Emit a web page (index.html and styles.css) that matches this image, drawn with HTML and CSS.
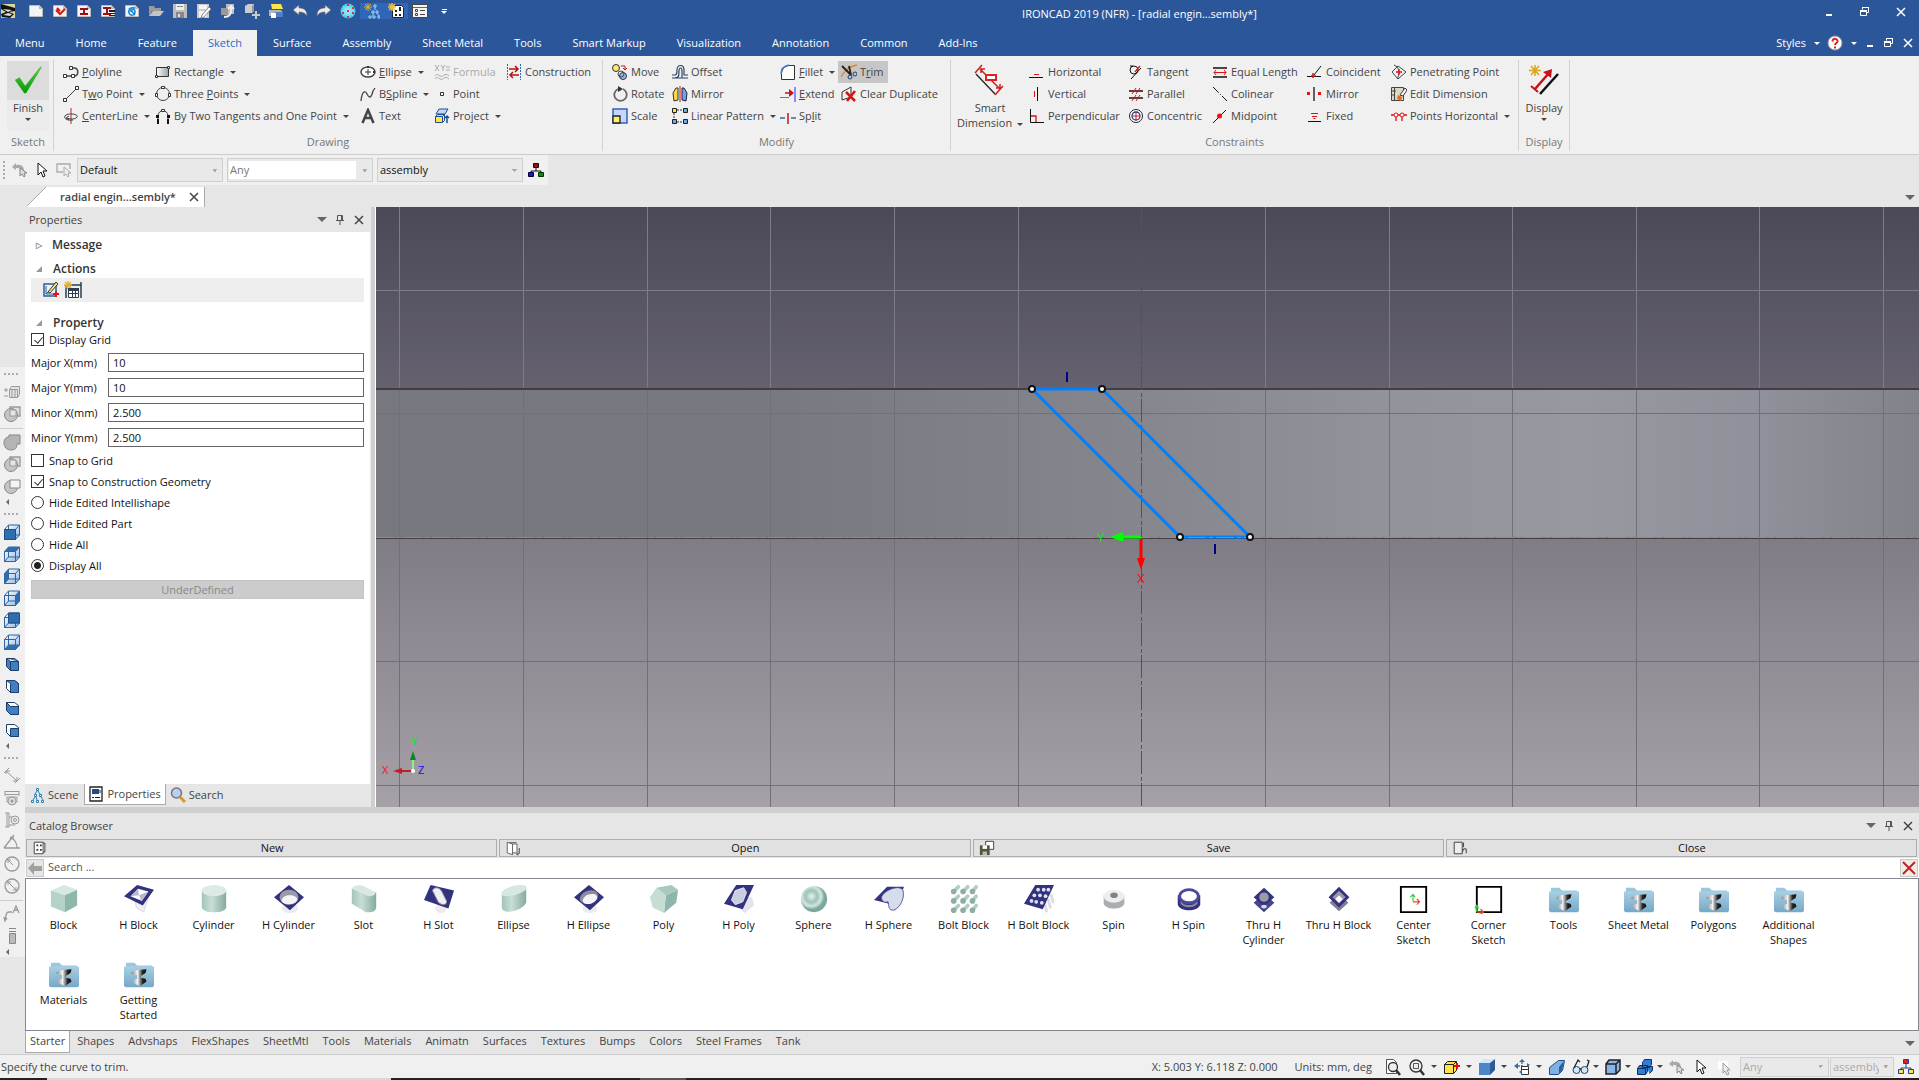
FILE: index.html
```html
<!DOCTYPE html>
<html lang="en">
<head>
  <meta charset="UTF-8" />
  <meta name="viewport" content="width=device-width, initial-scale=1.0"/>
  <title>IRONCAD 2019 (NFR) - [radial engin...sembly*]</title>
  <link rel="stylesheet" href="styles.css">
</head>
<body>
  <!-- icon sprite -->
  <svg class="sprite" aria-hidden="true">
    <defs>
      <linearGradient id="g-mint" x1="0" x2="1" y1="0" y2="1"><stop offset="0" stop-color="#dcebe3"/><stop offset="1" stop-color="#8fb5ab"/></linearGradient>
      <linearGradient id="g-mint2" x1="0" x2="1"><stop offset="0" stop-color="#a3c4ba"/><stop offset=".4" stop-color="#c9ded5"/><stop offset="1" stop-color="#84aba1"/></linearGradient>
      <linearGradient id="g-gray" x1="0" x2="1"><stop offset="0" stop-color="#fff"/><stop offset="1" stop-color="#9aa0a4"/></linearGradient>
      <linearGradient id="g-folder" x1="0" x2="0" y1="0" y2="1"><stop offset="0" stop-color="#a9cfe2"/><stop offset="1" stop-color="#74a9c8"/></linearGradient>
      <linearGradient id="g-metal" x1="0" x2="1"><stop offset="0" stop-color="#8a8a8a"/><stop offset=".4" stop-color="#f4f4f4"/><stop offset=".75" stop-color="#222"/><stop offset="1" stop-color="#111"/></linearGradient>
      <linearGradient id="g-blue" x1="0" x2="1" y1="0" y2="1"><stop offset="0" stop-color="#fff"/><stop offset="1" stop-color="#8fb8e6"/></linearGradient>
      <linearGradient id="g-check" x1="0" x2="0" y1="0" y2="1"><stop offset="0" stop-color="#5cc94a"/><stop offset="1" stop-color="#069a06"/></linearGradient>
      <radialGradient id="g-ball" cx=".4" cy=".4"><stop offset="0" stop-color="#e6f4ef"/><stop offset=".45" stop-color="#9cc3bb"/><stop offset=".75" stop-color="#d2e6de"/><stop offset="1" stop-color="#7ba79c"/></radialGradient>
      <radialGradient id="g-globe"><stop offset="0" stop-color="#c9ffff"/><stop offset="1" stop-color="#35c3e6"/></radialGradient>
    </defs>

    <!-- quick access -->
    <symbol id="logo" viewBox="0 0 16 16"><path fill="#d8d49a" d="M1 1h14v14H1z"/><path fill="#111" d="M1 1l14 4v3L9 9l5 2-4 4-8-1-1-3 5-2-5-3z"/><path fill="#ddd" d="M3 6l9 1-4 2zM3 12l7 1 2-2-4-1z"/></symbol>
    <symbol id="doc" viewBox="0 0 16 16"><path fill="#f4f4f4" stroke="#bbb" d="M1.500 2.500h10l3 3v8h-13z"/><path fill="#bbb" d="M11 2v4h4z"/></symbol>
    <symbol id="doc-check" viewBox="0 0 16 16"><use href="#doc"/><path fill="none" stroke="#d01818" stroke-width="2" d="M4 7l4 4 5-5M5 5l3 3"/></symbol>
    <symbol id="doc-i" viewBox="0 0 16 16"><use href="#doc"/><path fill="#a00d14" d="M4 5h8v2h-3v3h3v2H4v-2h3V7H4z"/></symbol>
    <symbol id="doc-i2" viewBox="0 0 16 16"><use href="#doc"/><path fill="#a00d14" d="M3 4h8v2H8v4h3v2H3v-2h3V6H3z"/><path fill="#222" d="M9 7h6v2H9zM9 10h6v1H9zM9 12h6v1H9z"/></symbol>
    <symbol id="doc-swirl" viewBox="0 0 16 16"><use href="#doc"/><path fill="none" stroke="#0d86d6" stroke-width="1.500" d="M11 5c-5-1-7 2-6 5s6 3 6-1-4-3-4 0M5 5l6 7"/></symbol>
    <symbol id="folder" viewBox="0 0 16 16"><path fill="#9a9a9a" d="M1 3h5l1 2h6v3H4l-3 5z"/><path fill="#c4c4c4" d="M5 8h11l-4 5H1z"/></symbol>
    <symbol id="disk" viewBox="0 0 16 16"><path fill="#bdbdbd" d="M1 1h14v14H1z"/><path fill="#eee" d="M4 1h8v6H4z"/><path fill="#888" d="M4 9h8v6H4zM5 3h6v1H5z"/><path fill="#ddd" d="M6 11h2v3H6z"/></symbol>
    <symbol id="disk-pen" viewBox="0 0 16 16"><path fill="#ccc" d="M1 1h12v14H1z"/><path fill="#f4f4f4" d="M3 2h8v4H3zM3 8h8v6H3z"/><path fill="#fff" stroke="#888" d="M6 12l7-8 2 2-7 8-3 1z"/></symbol>
    <symbol id="redo-page" viewBox="0 0 16 16"><path fill="#bdbdbd" d="M6 1h8v10H6z"/><path fill="#999" d="M1 5h7v7H1z"/><path fill="none" stroke="#eee" stroke-width="2" d="M4 14c6 0 8-4 7-10M8 6l3-3 3 3"/></symbol>
    <symbol id="cube-plus" viewBox="0 0 16 16"><path fill="#ccc" d="M1 3l3-2h6v7L8 10H1z"/><path fill="#999" d="M8 3l2-2v7l-2 2z"/><path fill="none" stroke="#ccc" stroke-width="2" d="M12 8v8M8 12h8"/></symbol>
    <symbol id="printer" viewBox="0 0 16 16"><path fill="#ffe34a" d="M3 1h10l2 5H4z"/><path fill="#b5b5b5" d="M1 7h12l2 3-1 3H1z"/><path fill="#4f7ec2" d="M7 9h8v5H7z"/><path fill="#fff" d="M3 10h5v5H3z"/></symbol>
    <symbol id="undo" viewBox="0 0 16 16"><path fill="#e8e8e8" stroke="#666" stroke-width=".6" d="M1 7l6-5v3c5 0 8 2 8 8-2-3-4-4-8-4v3z"/></symbol>
    <symbol id="redo" viewBox="0 0 16 16"><path fill="#e8e8e8" stroke="#666" stroke-width=".6" d="M15 7L9 2v3c-5 0-8 2-8 8 2-3 4-4 8-4v3z"/></symbol>
    <symbol id="globe" viewBox="0 0 16 16"><circle cx="8" cy="8" r="7.500" fill="url(#g-globe)"/><path fill="none" stroke="#7fe0f4" d="M1 8h14M8 1v14M3 3l10 10M13 3L3 13"/><path fill="#e03048" d="M7 1h2v2H7zM7 7h2v2H7zM2 9h2v2H2zM12 9h2v2h-2zM7 13h2v2H7zM12 4h2v2h-2z"/></symbol>
    <symbol id="tree-star" viewBox="0 0 16 16"><path stroke="#e8b030" d="M4 0v8M0 4h8M1 1l6 6M7 1L1 7"/><path fill="none" stroke="#9fd0f0" d="M10 2h2v2h-2zM8 8h2v2H8zM12 8h2v2h-2zM5 13h2v2H5zM9 13h2v2H9zM14 13h2v2h-2zM11 4v3M9 10v3M13 10l2 3"/></symbol>
    <symbol id="cat-star" viewBox="0 0 16 16"><path fill="#fff" stroke="#222" d="M4.500 2.500h9l2 2v10h-11z"/><path stroke="#f0c040" stroke-width="1.500" d="M4 0v8M0 4h8M1 1l6 6M7 1L1 7"/><path fill="#222" d="M7 7h2v2H7zM11 4h2v4h-2zM7 11h2v2H7zM11 11h2v2h-2z"/></symbol>
    <symbol id="listbox" viewBox="0 0 16 16"><path fill="#f4f4f4" stroke="#444" d="M.5 1.500h15v13H.5z"/><path fill="#666" d="M1 4h14v1H1z"/><path stroke="#444" fill="none" d="M3.500 6.500h2v2h-2zM3.500 10.500h2v2h-2zM8 7.500h5M8 11.500h5"/></symbol>
    <symbol id="help" viewBox="0 0 16 16"><circle cx="8" cy="8" r="7" fill="#fff" stroke="#999"/><path fill="none" stroke="#d22" stroke-width="2" d="M5.500 6.500c0-4 5.500-3 5 0 0 1.500-2.500 2-2.500 3.500M8 11.500v2"/></symbol>
    <symbol id="restore" viewBox="0 0 12 12"><path fill="none" stroke="#fff" stroke-width="1" d="M3.500 3.500v-2h6v5h-2M1.500 4.500h6v5h-6z"/><path fill="#fff" d="M1 4h7v2H1zM3 1h7v1H3z"/></symbol>
    <symbol id="minus" viewBox="0 0 12 12"><path fill="#fff" d="M3 8h6v2H3z"/></symbol>
    <symbol id="cross" viewBox="0 0 12 12"><path fill="none" stroke="currentColor" stroke-width="1.500" d="M2 2l8 8M10 2l-8 8"/></symbol>
    <symbol id="pin" viewBox="0 0 12 12"><path fill="none" stroke="#555" d="M3.500 6.500v-5h5v5M2 6.500h8M6 7v4M7.500 1v5"/></symbol>

    <!-- ribbon -->
    <symbol id="finish" viewBox="0 0 34 34"><path fill="url(#g-check)" d="M3 17l5-3 6 9L30 3h2L15 31h-2z"/></symbol>
    <symbol id="polyline" viewBox="0 0 16 16"><path fill="none" stroke="#444" stroke-width="1.500" d="M2 12h9c5 0 5-8 0-8H8"/><path fill="#fff" stroke="#333" d="M.5 10.500h3v3h-3zM6.500 2.500h3v3h-3zM8.500 10.500h3v3h-3z"/></symbol>
    <symbol id="line2" viewBox="0 0 16 16"><path stroke="#444" d="M2 14L14 2"/><path fill="#fff" stroke="#333" d="M.5 12.500h3v3h-3zM12.500.5h3v3h-3z"/></symbol>
    <symbol id="centerline" viewBox="0 0 16 16"><path stroke="#c22" d="M8 0v16"/><path fill="none" stroke="#444" d="M10 12C2 13 0 9 3 7s13-1 11 2-8 2-10 1M6 8l-3 2 3 2"/></symbol>
    <symbol id="rect" viewBox="0 0 16 16"><path fill="url(#g-gray)" stroke="#333" d="M1.500 3.500h12v9h-12z"/><path fill="#fff" stroke="#333" d="M.5 11.500h2v2h-2zM12.500 2.500h2v2h-2z"/></symbol>
    <symbol id="circle3" viewBox="0 0 16 16"><circle cx="8" cy="8" r="6.500" fill="#eee" stroke="#444"/><path fill="#fff" stroke="#333" d="M6.500.5h3v2h-3zM.5 7.500h2v3h-2zM13.500 7.500h2v3h-2z"/></symbol>
    <symbol id="arc" viewBox="0 0 16 16"><path fill="none" stroke="#444" d="M3 13V8c0-7 10-7 10 0v5"/><path fill="#111" d="M2 11h2v5H2zM12 11h2v5h-2zM1 7h3v3H1zM12 7h3v3h-3z"/><path fill="#fff" stroke="#333" d="M6.500 1.500h3v2h-3z"/></symbol>
    <symbol id="ellipse" viewBox="0 0 16 16"><ellipse cx="8" cy="8" rx="7" ry="5" fill="#fff" stroke="#444" stroke-width="1.500"/><path stroke="#333" d="M8 5v6M5 8h6"/><path fill="#333" d="M7 2h2v2H7zM13 7h2v2h-2z"/></symbol>
    <symbol id="spline" viewBox="0 0 16 16"><path fill="none" stroke="#444" stroke-width="1.300" d="M1 15C2 5 5 4 7 8s4 5 6-3l2-3"/></symbol>
    <symbol id="text" viewBox="0 0 16 16"><path fill="none" stroke="#444" stroke-width="2.500" d="M2.500 15L8 2l5.500 13M5 10h6"/></symbol>
    <symbol id="formula" viewBox="0 0 16 16"><path fill="none" stroke="#aaa" d="M1 1l4 6M5 1L1 7M7 1l2 3 2-3M9 4v3M12 3h4M12 6h4M1 12c2-3 3-1 5 0s3 0 4-1 3-1 5 1M1 15c2-3 3-1 5 0s3 0 4-1 3-1 5 1"/></symbol>
    <symbol id="point" viewBox="0 0 16 16"><path fill="#fff" stroke="#333" d="M6.500 6.500h3v3h-3z"/></symbol>
    <symbol id="project" viewBox="0 0 16 16"><path fill="#bcd8f5" stroke="#1c4f96" d="M5 1h9l-3 5H2z"/><path fill="#ffe34a" stroke="#1c4f96" d="M1.500 8.500h7v6h-7zM1.500 8.500l2-2h7l-2 2M10.500 6.500v6l-2 2"/><path fill="none" stroke="#1c4f96" stroke-width="1.500" d="M13 15V8M11 10l2-2 2 2"/></symbol>
    <symbol id="construct" viewBox="0 0 16 16"><path stroke="#226bc0" stroke-dasharray="2 1" d="M1.500 0v16M14.500 0v16"/><path fill="none" stroke="#b11" stroke-width="1.500" d="M3 5h9M9 2l3 3-3 3M13 11H4M7 8l-3 3 3 3"/></symbol>
    <symbol id="move" viewBox="0 0 16 16"><circle cx="4" cy="4" r="3.500" fill="#ffe96a" stroke="#333"/><circle cx="11" cy="12" r="3.500" fill="#8fbbe8" stroke="#333"/><circle cx="9" cy="10" r="3" fill="none" stroke="#446"/><path fill="none" stroke="#c11" d="M9 2h4v4M11 4l2 2 2-2"/></symbol>
    <symbol id="rotate" viewBox="0 0 16 16"><path fill="none" stroke="#666" stroke-width="1.800" d="M6 3a6.200 6.200 0 1 0 5 0"/><path fill="#333" d="M6 0l5 3-5 3z"/></symbol>
    <symbol id="scale" viewBox="0 0 16 16"><path fill="#c5d8fb" stroke="#3a5fb8" stroke-width="1.500" d="M1 1h14v14H1z"/><path fill="#fff06a" stroke="#222" stroke-width="1.300" d="M1 8h7v7H1z"/></symbol>
    <symbol id="offset" viewBox="0 0 16 16"><path fill="none" stroke="#2c4664" stroke-width="1.200" d="M0 14h16M0 11h3c2 0 2-2 2-5 0-6 7-6 7 0v5h4M2 14c5 0 5-2 5-7 0-4 3-4 3 0v7h6"/></symbol>
    <symbol id="mirror-m" viewBox="0 0 16 16"><path fill="#ffd940" stroke="#333" d="M6 2v12l-4 1-1-8 3-5z"/><path fill="#6ea5e2" stroke="#224" d="M10 2v12l4 1 1-8-3-5z"/><path stroke="#c11" d="M8 0v16"/></symbol>
    <symbol id="pattern" viewBox="0 0 16 16"><path fill="none" stroke="#333" stroke-dasharray="2 1" d="M2 2h12M2 2v12h12"/><path fill="#ffe34a" stroke="#222" d="M.5.5h4v4h-4z"/><path fill="#6ea5e2" stroke="#222" d="M11.500.5h4v4h-4zM.5 11.500h4v4h-4zM11.500 11.500h4v4h-4z"/></symbol>
    <symbol id="fillet" viewBox="0 0 16 16"><path fill="#fff" stroke="#333" d="M1.500 15.500h13V1.500H9c-5 1-7 4-7.500 8z"/><path fill="none" stroke="#3a7fd0" stroke-width="1.500" d="M1 10c0-5 3-8 8-9"/></symbol>
    <symbol id="extend" viewBox="0 0 16 16"><path stroke="#4a7dd0" d="M0 11.500h9"/><path stroke="#c11" stroke-width="1.500" d="M5 7h7" fill="none"/><path fill="#c11" d="M9 3l5 4-5 4z"/><path stroke="#8a8aff" stroke-width="2" d="M15 1v15"/></symbol>
    <symbol id="split" viewBox="0 0 16 16"><path stroke="#2b6aa8" stroke-width="1.300" d="M0 10h5M11 10h5"/><path stroke="#c11" stroke-width="1.500" d="M8 5v11"/></symbol>
    <symbol id="trim" viewBox="0 0 16 16"><path fill="none" stroke="#e6862a" stroke-width="1.500" d="M0 13C4 5 10 2 16 1"/><path stroke="#222" stroke-width="1.800" d="M1 2l9 9M8 2l2 9"/><circle cx="9" cy="13" r="2" fill="none" stroke="#1c3f70"/><circle cx="14" cy="10" r="2" fill="none" stroke="#1c3f70"/></symbol>
    <symbol id="clear" viewBox="0 0 16 16"><path fill="none" stroke="#333" d="M1 6l9-5v9M1 6v8l9-3"/><path stroke="#d11" stroke-width="2.500" d="M5 6l9 9M14 5l-8 10"/></symbol>
    <symbol id="smart" viewBox="0 0 32 32"><path stroke="#222" stroke-width="1.300" d="M2 10l19 20"/><path fill="none" stroke="#c92020" stroke-width="1.500" d="M1 9l7-8M21 31l8-9M6 5l20 20M7 9V5h4M26 20v4h-4"/><path fill="#fff" stroke="#d22" stroke-width="2" d="M12 11h10v5H12z"/></symbol>
    <symbol id="c-horiz" viewBox="0 0 16 16"><path stroke="#111" d="M0 13.500h14"/><path stroke="#d11" d="M5 10.500h5"/></symbol>
    <symbol id="c-vert" viewBox="0 0 16 16"><path stroke="#111" d="M8.500 1v14"/><path stroke="#d11" d="M5.500 5v6"/></symbol>
    <symbol id="c-perp" viewBox="0 0 16 16"><path fill="none" stroke="#111" d="M1.500 1v13.500H15"/><path fill="none" stroke="#d11" stroke-width="1.300" d="M2 8h5v6"/></symbol>
    <symbol id="c-tan" viewBox="0 0 16 16"><circle cx="6" cy="6" r="4" fill="none" stroke="#111"/><path stroke="#111" d="M3 15L13 4M2 2l3 0"/><path stroke="#d11" stroke-width="1.300" d="M7 8l5-6"/></symbol>
    <symbol id="c-par" viewBox="0 0 16 16"><path stroke="#111" stroke-width="1.300" d="M1 5h14M1 12h14"/><path stroke="#d11" d="M4 8l4-6M8 8l4-6M4 15l4-6M8 15l4-6"/></symbol>
    <symbol id="c-conc" viewBox="0 0 16 16"><circle cx="8" cy="8" r="6.500" fill="#fff" stroke="#223"/><circle cx="8" cy="8" r="4" fill="none" stroke="#336" stroke-width="1.300"/><path stroke="#d11" d="M8 5v6M5 8h6"/></symbol>
    <symbol id="c-equal" viewBox="0 0 16 16"><path stroke="#111" stroke-width="1.500" d="M1 4h14M1 13h14"/><path fill="none" stroke="#d11" d="M2 8.500h12M4 6L2 8.500 4 11M12 6l2 2.500-2 2.500"/></symbol>
    <symbol id="c-colin" viewBox="0 0 16 16"><path stroke="#111" d="M1 1l5 5M10 10l5 5"/><path stroke="#111" stroke-dasharray="1 2" d="M6 6l4 4"/></symbol>
    <symbol id="c-mid" viewBox="0 0 16 16"><path stroke="#111" d="M1 15L14 2"/><circle cx="7.500" cy="8" r="2.500" fill="#e11"/></symbol>
    <symbol id="c-coin" viewBox="0 0 16 16"><path fill="none" stroke="#111" d="M14 2L7 11M0 12.500h14"/><path stroke="#d11" stroke-width="1.500" d="M6 9v5M4 12h5"/></symbol>
    <symbol id="c-mirror" viewBox="0 0 16 16"><path stroke="#111" stroke-width="1.300" d="M7 1v14"/><path fill="#e11" d="M0 6h3v3H0zM11 6h3v3h-3z"/></symbol>
    <symbol id="c-fixed" viewBox="0 0 16 16"><path stroke="#111" d="M1 13.500h13"/><path stroke="#d11" d="M4 5.500h7M5 8.500h5M6.500 10.500h2"/></symbol>
    <symbol id="c-pen" viewBox="0 0 16 16"><path fill="none" stroke="#444" d="M3 1c6 2 6 10 3 14M1 8l6-6 8 6-8 7z"/><path stroke="#d11" stroke-width="1.300" d="M8 5v6M5 8h6"/></symbol>
    <symbol id="c-edit" viewBox="0 0 16 16"><path fill="#ded7c4" stroke="#444" d="M.5 1.500h12v13H.5z"/><path stroke="#444" fill="none" d="M3.500 2v12M1 5h4M1 9h3"/><path fill="#fff" stroke="#333" d="M9 9l5-7 2 2-4 6z"/><path fill="#e06a20" d="M7 9l4 2-1 4-4-2z"/></symbol>
    <symbol id="c-points" viewBox="0 0 16 16"><path stroke="#d11" stroke-width="1.300" d="M0 7h16M5 8v5M11 8v5"/><circle cx="5" cy="7" r="2" fill="#fff" stroke="#d11"/><circle cx="11" cy="7" r="2" fill="#fff" stroke="#d11"/></symbol>
    <symbol id="display" viewBox="0 0 32 32"><path stroke="#d9a520" stroke-width="1.500" d="M7 1v11M1 6.500h12M3 2l8 9M11 2l-8 9"/><path stroke="#c81018" stroke-width="2.500" d="M7 25L21 9"/><path fill="#c81018" d="M24 5l-1 9-8-6z"/><path stroke="#c81018" stroke-width="2" d="M3 22l7 6"/><path stroke="#111" stroke-width="2.500" d="M12 30L30 10"/></symbol>

    <!-- selection bar -->
    <symbol id="sel-undo" viewBox="0 0 18 18"><path fill="#a9a9a9" d="M1 6l4-4v2c6-1 8 2 8 6l-3-2c-1-1-3-1-5-1v2z"/><path fill="#ddd" stroke="#888" d="M9 7v8l2-2 2 3 1-1-1-3h3z"/></symbol>
    <symbol id="cursor" viewBox="0 0 18 18"><path fill="#fff" stroke="#111" d="M5 2v12l3-3 2 5 2-1-2-5h4z"/></symbol>
    <symbol id="sel-box" viewBox="0 0 18 18"><path fill="none" stroke="#aaa" stroke-width="1.300" d="M8 11H2V3h13v5"/><path fill="#eee" stroke="#aaa" d="M9 6v9l2-2 2 3 1-1-1-3h3z"/></symbol>
    <symbol id="pick-gray" viewBox="0 0 18 18"><path fill="#fff" d="M2 3h10v8H2z"/><path fill="#eee" stroke="#999" d="M7 5v10l2-2 2 4 2-1-2-4h3z"/></symbol>
    <symbol id="org" viewBox="0 0 18 18"><path fill="none" stroke="#111" d="M9 6v4M4 12v-2h10v2"/><path fill="#8b1216" stroke="#300" d="M6.500 2.500h5v4h-5z"/><path fill="#1414e0" stroke="#003" d="M1.500 11.500h5v4h-5z"/><path fill="#0a8a1a" stroke="#030" d="M11.500 11.500h5v4h-5z"/></symbol>
    <symbol id="org2" viewBox="0 0 18 18"><path fill="none" stroke="#1c3fa0" d="M9 6v4M4 12v-2h10v2"/><path fill="#e02020" stroke="#1c3fa0" d="M6.500 1.500h5v4h-5z"/><path fill="#ffe34a" stroke="#1c3fa0" d="M1.500 11.500h5v4h-5zM11.500 11.500h5v4h-5z"/></symbol>

    <!-- panel -->
    <symbol id="act-edit" viewBox="0 0 18 18"><path fill="#e9f2fb" stroke="#2b5f96" stroke-width="1.500" d="M2 3h12v12H2z"/><path fill="none" stroke="#2b5f96" d="M4 5v8h8M4 13l5-5"/><path fill="#ffe07a" stroke="#333" d="M6 11l8-10 2 2-8 9z"/><path stroke="#e11" stroke-width="2" d="M14 10v6M11 13h6"/></symbol>
    <symbol id="act-table" viewBox="0 0 18 18"><path stroke="#2c3e50" stroke-width="1.500" d="M2 4v13M17 1v16M5 4h12"/><path stroke="#e8b030" stroke-width="1.300" d="M4 0v8M0 4h8M1 1l6 6M7 1L1 7"/><path fill="#fff" stroke="#2c3e50" d="M4.500 7.500h10v9h-10z"/><path fill="#2c3e50" d="M4 7h11v3H4zM4 12h11v1H4zM8 9h1v8H8zM11 9h1v8h-1z"/></symbol>
    <symbol id="scene" viewBox="0 0 16 16"><path fill="#fff" stroke="#2f80b8" d="M7.500 1.500h2v2h-2zM5.500 7.500h2v2h-2zM10.500 7.500h2v2h-2zM2.500 13.500h2v2h-2zM7.500 13.500h2v2h-2zM12.500 13.500h2v2h-2zM8 4L6 7M9 4l2 3M6 10l-2 3M7 10l1 3M12 10l2 3"/></symbol>
    <symbol id="props" viewBox="0 0 16 16"><path fill="#fff" stroke="#222" stroke-width="1.300" d="M2 1h12v14H2z"/><path fill="#1f4e80" d="M4 3h7v5H4z"/><path stroke="#222" d="M4 11.500h2M7 11.500h5M12 4v3"/></symbol>
    <symbol id="search" viewBox="0 0 16 16"><circle cx="6.500" cy="6" r="5" fill="#b8d0f5" stroke="#777" stroke-width="1.500"/><path stroke="#d99a20" stroke-width="3" d="M10 10l5 5"/></symbol>
    <symbol id="book" viewBox="0 0 18 18"><path fill="#fff" stroke="#333" d="M2.500 2.500h10v13h-10zM12.500 3.500h2v10h-2"/><path fill="#333" d="M5 5h2v2H5zM9 5h2v2H9zM5 10h2v2H5zM9 10h2v2H9z"/></symbol>
    <symbol id="book-open" viewBox="0 0 18 18"><path fill="#fff" stroke="#555" d="M2.500 2.500l6 2v12l-6-2zM8.500 4.500h5v10h-5M5 3h8"/><path fill="none" stroke="#333" d="M16 9v6l-3 1 2 1"/></symbol>
    <symbol id="book-save" viewBox="0 0 18 18"><path fill="#fff" stroke="#333" d="M7.500 1.500h9v9h-9z"/><path fill="#55553a" d="M1 6h11v11H1z"/><path fill="#fff" d="M4 6h5v4H4z"/><path fill="#bbb" d="M4 13h5v4H4z"/></symbol>
    <symbol id="book-close" viewBox="0 0 18 18"><path fill="#eee" stroke="#333" d="M2.500 2.500h9v13h-9z"/><path fill="none" stroke="#333" d="M13 3v5M13 10l-1 3M13 10h3v5"/></symbol>

    <!-- side toolbar -->
    <symbol id="s-cube" viewBox="0 0 18 18"><path fill="#e4e4e4" stroke="#999" d="M6.500 6.500h8v8h-8zM6.500 6.500l2-3h8v8l-2 3M9 7v8M12 7v8M1 7h4M3 5v4M1 13h4"/></symbol>
    <symbol id="s-bool" viewBox="0 0 18 18"><path fill="#ddd" stroke="#999" stroke-width="1.300" d="M7 2h10v9H7z"/><circle cx="8" cy="10" r="6.500" fill="#c4c4c4" stroke="#888"/><path fill="#e6e6e6" stroke="#999" d="M7 5h6v6H7z"/></symbol>
    <symbol id="s-bool2" viewBox="0 0 18 18"><path fill="#b4b4b4" stroke="#888" d="M6 2h11v9h-3c0 4-2 6-6 6s-7-3-7-7 2-6 5-6z"/></symbol>
    <symbol id="s-bool3" viewBox="0 0 18 18"><circle cx="8" cy="10" r="6.500" fill="#c4c4c4" stroke="#888"/><path fill="#f4f4f4" stroke="#888" d="M7 3h10v8H7z"/></symbol>
    <symbol id="v-box" viewBox="0 0 18 18"><path fill="url(#g-blue)" stroke="#2d659c" d="M1.500 6.500l4-4.500h11v10l-4 4.500h-11z"/><path fill="none" stroke="#2d659c" d="M1.500 6.500h11v10M12.500 6.500l4-4.500M5.500 2v10h11M5.500 12l-4 4.500"/></symbol>
    <symbol id="v-front" viewBox="0 0 18 18"><use href="#v-box"/><path fill="#2f6dae" stroke="#1d4f86" d="M1.500 6.500h11v10h-11z"/></symbol>
    <symbol id="v-top" viewBox="0 0 18 18"><use href="#v-box"/><path fill="#2f6dae" d="M1.500 6.500l4-4.500h11l-4 4.500z"/></symbol>
    <symbol id="v-left" viewBox="0 0 18 18"><use href="#v-box"/><path fill="#2f6dae" d="M1.500 6.500l4-4.500v10l-4 4.500z"/></symbol>
    <symbol id="v-right" viewBox="0 0 18 18"><use href="#v-box"/><path fill="#2f6dae" d="M12.500 6.500l4-4.500v10l-4 4.500z"/></symbol>
    <symbol id="v-back" viewBox="0 0 18 18"><use href="#v-box"/><path fill="#2f6dae" stroke="#1d4f86" d="M5.500 2h11v10h-11z"/></symbol>
    <symbol id="v-bottom" viewBox="0 0 18 18"><use href="#v-box"/><path fill="#2f6dae" d="M1.500 16.500l4-4.500h11l-4 4.500z"/></symbol>
    <symbol id="v-iso1" viewBox="0 0 18 18"><path fill="#3f80c4" stroke="#1d3f6a" d="M3.500 3.500h8l4 3v9h-8l-4-4zM3.500 3.500l4 3h8M7.500 6.500v9"/></symbol>
    <symbol id="v-iso2" viewBox="0 0 18 18"><path fill="#fff" stroke="#1d3f6a" d="M3.500 3.500h8l4 3v9h-8l-4-4z"/><path fill="#3f80c4" stroke="#1d3f6a" d="M3.500 3.500h8l4 3v9h-8v-9z"/></symbol>
    <symbol id="v-iso3" viewBox="0 0 18 18"><path fill="#fff" stroke="#1d3f6a" d="M3.500 3.500h8l4 3v9h-8l-4-4z"/><path fill="#3f80c4" stroke="#1d3f6a" d="M3.500 3.500l4 4h8v8h-8l-4-4z"/></symbol>
    <symbol id="v-iso4" viewBox="0 0 18 18"><path fill="#fff" stroke="#1d3f6a" d="M3.500 3.500h8l4 3v9h-8l-4-4z"/><path fill="#3f80c4" stroke="#1d3f6a" d="M7.500 7.500h8v8h-8z"/></symbol>
    <symbol id="d-line" viewBox="0 0 18 18"><path fill="none" stroke="#999" d="M1 6l5-5M12 16l5-5M3 4l11 10M3 7V4h4M14 10v4h-4"/></symbol>
    <symbol id="d-slot" viewBox="0 0 18 18"><path fill="none" stroke="#999" d="M2 2.500h14M2 5.500h14M2 2v5M16 2v5M4 8h10v5H4z"/><circle cx="9" cy="12" r="4" fill="#ddd" stroke="#999"/><circle cx="9" cy="12" r="1.500" fill="#999"/></symbol>
    <symbol id="d-ord" viewBox="0 0 18 18"><path fill="none" stroke="#999" d="M2 2h4v14H2M4 2v14M6 6h6M6 14h6"/><circle cx="12" cy="9" r="4" fill="#eee" stroke="#999"/><circle cx="12" cy="9" r="1.500" fill="none" stroke="#999"/></symbol>
    <symbol id="d-angle" viewBox="0 0 18 18"><path fill="none" stroke="#999" stroke-width="1.300" d="M1 15h16M1 15L11 2M8 5c5 2 6 6 6 10M7 7l1-3 3 1"/></symbol>
    <symbol id="d-rad" viewBox="0 0 18 18"><circle cx="9" cy="9" r="7" fill="none" stroke="#999" stroke-width="1.300"/><path fill="none" stroke="#999" d="M10 10L4 4M5 8V5h3"/></symbol>
    <symbol id="d-dia" viewBox="0 0 18 18"><circle cx="9" cy="9" r="7" fill="none" stroke="#999" stroke-width="1.300"/><path fill="none" stroke="#999" d="M4 4l10 10M5 8V5h3M13 10v3h-3"/></symbol>
    <symbol id="d-note" viewBox="0 0 18 18"><path fill="none" stroke="#999" stroke-width="1.300" d="M2 16c1-6 1-9 4-9h3M1 12l1 4 2-3M10 8l3-7 3 7M11 5h4"/></symbol>
    <symbol id="d-bolt" viewBox="0 0 18 18"><path stroke="#888" d="M6 1.500h7M6 4.500h7"/><path fill="#bbb" stroke="#888" d="M6.500 6.500h6v10h-6z"/></symbol>

    <!-- status bar -->
    <symbol id="zoom-doc" viewBox="0 0 18 18"><path fill="#fff" stroke="#555" d="M2.500 1.500h7l3 3v11h-10z"/><circle cx="9" cy="9" r="4.500" fill="#eee" stroke="#333" stroke-width="1.300"/><path stroke="#333" stroke-width="2.500" d="M12 12l4 5"/></symbol>
    <symbol id="zoom-box" viewBox="0 0 18 18"><circle cx="8" cy="8" r="6" fill="#eee" stroke="#333" stroke-width="1.300"/><path fill="none" stroke="#555" d="M5.500 5.500h5v5h-5z"/><path stroke="#333" stroke-width="2.500" d="M12 12l4 5"/></symbol>
    <symbol id="ycube" viewBox="0 0 18 18"><path fill="#ffe34a" stroke="#222" d="M1.500 6.500l3-3h9v9l-3 3h-9zM1.500 6.500h9v9M10.500 6.500l3-3"/><path stroke="#d11" stroke-width="2" d="M14 5v6M11 8h6"/></symbol>
    <symbol id="bcube" viewBox="0 0 18 18"><path fill="#4c86c6" d="M1 5h11v12H1z"/><path fill="#d2e6fa" d="M1 5l4-4h12l-5 4z"/><path fill="#2a5d9a" d="M12 5l5-4v11l-5 5z"/></symbol>
    <symbol id="camera" viewBox="0 0 18 18"><path fill="#fff" stroke="#333" d="M8.500 8.500h7v8h-7zM8 11.500h8"/><path fill="#2a6db5" d="M9 1l3 3H6zM1 8l4-3v6zM17 7l-3-2v4zM6 14l3-2v4z"/><path stroke="#333" stroke-dasharray="2 1" d="M5 8h4M9 4v4"/></symbol>
    <symbol id="wedge" viewBox="0 0 18 18"><path fill="#7fb0e4" stroke="#1d4f86" d="M1.500 9.500l9-7h6l-2 10-4 4h-9z"/><path fill="#2a5d9a" d="M11 9l5-6-2 9-3 4z"/></symbol>
    <symbol id="glasses" viewBox="0 0 18 18"><circle cx="4.500" cy="12" r="3.500" fill="#cfe6fb" stroke="#246"/><circle cx="12.500" cy="12" r="3.500" fill="#cfe6fb" stroke="#246"/><path fill="none" stroke="#222" stroke-width="1.300" d="M2 10l4-8 2 2M15 9l2-6-2-1M8 11h1"/></symbol>
    <symbol id="edgebox" viewBox="0 0 18 18"><path fill="#8ab4e6" stroke="#222" stroke-width="1.500" d="M2 6l3-4h11v10l-4 4H2zM2 6h10v10M12 6l4-4"/></symbol>
    <symbol id="blocks" viewBox="0 0 18 18"><path fill="#2f7fd6" stroke="#12305a" d="M6.500 4.500l2-3h7v5l-2 3h-7zM1.500 10.500l2-3h8v6l-2 3h-8zM10.500 8.500h6v4l-3 3M1.500 10.500h8v6M9.500 10.500l2-3"/></symbol>

    <!-- catalog shapes -->
    <symbol id="k-block" viewBox="0 0 32 32"><path fill="#d6e8df" d="M2 7l14-6 14 5-13 6z"/><path fill="#b4d2c7" d="M2 7l15 5v18L2 24z"/><path fill="#8fb6aa" d="M17 12l13-6v17l-13 7z"/></symbol>
    <symbol id="k-cyl" viewBox="0 0 32 32"><path fill="url(#g-mint2)" d="M3 7v18c2 7 24 7 26 0V7z"/><ellipse cx="16" cy="7" rx="13" ry="6" fill="#dcebe4"/></symbol>
    <symbol id="k-slot" viewBox="0 0 32 32"><path fill="url(#g-mint2)" d="M3 5v16l15 9c5 1 11-1 11-5V9z"/><path fill="#d6e8df" d="M3 5c3-5 10-4 14-2l10 5c4 3-4 7-9 4z"/></symbol>
    <symbol id="k-ell" viewBox="0 0 32 32"><path fill="url(#g-mint2)" d="M3 11v15c3 7 21 3 26-6V4z"/><ellipse cx="16" cy="7" rx="14" ry="5" fill="#d6e8df" transform="rotate(-15 16 7)"/></symbol>
    <symbol id="k-poly" viewBox="0 0 32 32"><path fill="#8fb6aa" d="M18 12L31 6 29 20 16 31z"/><path fill="#c5ddd3" d="M1 14L8 4l10 8-2 19L4 25z"/><path fill="#a9c9be" d="M8 4L24 1l7 5-13 6z"/></symbol>
    <symbol id="k-sphere" viewBox="0 0 32 32"><circle cx="16" cy="16" r="14" fill="url(#g-ball)"/></symbol>
    <symbol id="k-hblock" viewBox="0 0 32 32"><path fill="#f0f0f3" stroke="#d8d8de" d="M12 18l14-4-5 16-8-5z"/><path fill="#32327f" fill-rule="evenodd" d="M0 13L14 1l18 5-12 17zM7 13l12 5 7-10-11-3z"/><path fill="#b8b8c8" d="M7 13l8-8 1 7zM16 12l10-4-7 10z"/></symbol>
    <symbol id="k-hcyl" viewBox="0 0 32 32"><ellipse cx="17" cy="26" rx="9" ry="5" fill="#ececf0"/><path fill="#32327f" d="M0 14L16 1l16 13-15 14z"/><ellipse cx="16" cy="14" rx="10" ry="8" fill="#9a9aa8"/><path fill="#f4f4f8" d="M8 18c0-8 17-8 17-1-3 6-14 6-17 1z"/></symbol>
    <symbol id="k-hslot" viewBox="0 0 32 32"><ellipse cx="18" cy="26" rx="6" ry="5" fill="#ececf0"/><path fill="#32327f" d="M7 1l25 6-6 19L0 17z"/><path fill="#f0f0f4" stroke="#888a9a" d="M9 7c2-5 8-3 10 1l5 10c1 5-6 5-9 1z"/></symbol>
    <symbol id="k-hell" viewBox="0 0 32 32"><ellipse cx="17" cy="26" rx="8" ry="5" fill="#ececf0"/><path fill="#32327f" d="M0 14L16 1l16 13-15 14z"/><ellipse cx="16" cy="14" rx="10" ry="7" fill="#8e8e9c" transform="rotate(-20 16 14)"/><ellipse cx="17" cy="16" rx="8" ry="5" fill="#f4f4f8" transform="rotate(-20 17 16)"/></symbol>
    <symbol id="k-hpoly" viewBox="0 0 32 32"><path fill="#e4e4ea" d="M20 14h10l2 9-10 8-6-6z"/><path fill="#32327f" d="M13 1h19L20 27 0 21z"/><path fill="#c9cfe0" stroke="#e8e8f0" d="M12 7l9-3 3 5-4 10-8 3-4-5z"/></symbol>
    <symbol id="k-hsphere" viewBox="0 0 32 32"><path fill="#e8e8ee" d="M10 18l14 12-4-14z"/><path fill="#32327f" d="M0 17L14 3l18 0-8 20z"/><path fill="#d5dcec" stroke="#54549a" d="M8 14c3-8 20-14 23-7 2 9-4 20-11 21-5 0-4-6-5-9-3 1-7 0-7-5z"/></symbol>
    <symbol id="k-bolt" viewBox="0 0 32 32"><path stroke="#b4cdc3" stroke-width="4" stroke-linecap="round" d="M5 8l5-5M15 8l5-5M25 8l4-5M5 18l5-5M15 18l5-5M25 18l4-5M5 28l5-5M15 28l5-5M25 28l4-5"/><g fill="#8fada3"><circle cx="5" cy="8" r="3"/><circle cx="15" cy="8" r="3"/><circle cx="25" cy="8" r="3"/><circle cx="5" cy="18" r="3"/><circle cx="15" cy="18" r="3"/><circle cx="25" cy="18" r="3"/><circle cx="5" cy="28" r="3"/><circle cx="15" cy="28" r="3"/><circle cx="25" cy="28" r="3"/></g></symbol>
    <symbol id="k-hbolt" viewBox="0 0 32 32"><path stroke="#dcdce2" stroke-width="3" stroke-linecap="round" d="M22 20l2 9M26 17l2 8M29 12l2 7"/><path fill="#32327f" d="M12 1h20L20 27 0 21z"/><g fill="#dfe3f0"><circle cx="15" cy="6" r="2"/><circle cx="21" cy="6" r="2"/><circle cx="26" cy="6" r="2"/><circle cx="11" cy="12" r="2"/><circle cx="17" cy="12" r="2"/><circle cx="23" cy="13" r="2"/><circle cx="8" cy="18" r="2"/><circle cx="13" cy="19" r="2"/><circle cx="19" cy="20" r="2"/></g></symbol>
    <symbol id="k-spin" viewBox="0 0 32 32"><path fill="#a9aeb2" d="M5 12v9c3 7 19 7 22 0v-9z"/><ellipse cx="16" cy="13" rx="11" ry="7" fill="#eceef0"/><ellipse cx="16" cy="12" rx="4" ry="3" fill="#7d848a"/></symbol>
    <symbol id="k-hspin" viewBox="0 0 32 32"><path fill="#32327f" d="M4 12v10c3 8 21 8 24 0V12z"/><path fill="#8a8a98" d="M7 18c4 6 14 6 18 0v3c-4 5-14 5-18 0z"/><ellipse cx="16" cy="13" rx="10" ry="7" fill="#fff" stroke="#4a4a9c" stroke-width="3"/></symbol>
    <symbol id="k-tcyl" viewBox="0 0 32 32"><path fill="#45458f" d="M5 20l11-10 11 10-11 10z"/><path fill="#32327f" d="M5 14L16 4l11 10-11 10z"/><circle cx="16" cy="14" r="5" fill="#9a9aa8"/><ellipse cx="16" cy="24" rx="3" ry="2" fill="#d8d8e0"/></symbol>
    <symbol id="k-tblk" viewBox="0 0 32 32"><path fill="#7e7e94" d="M6 20l10-10 10 10-10 9z"/><path fill="#9898a8" stroke="#32327f" stroke-width="3" d="M7 14l9-9 9 9-9 9z"/><path fill="#fff" d="M12 16l4-4 4 4-4 4z"/></symbol>
    <symbol id="k-center" viewBox="0 0 32 32"><path fill="#fff" stroke="#000" stroke-width="2" d="M2 3h27v27H2z"/><path fill="none" stroke="#3c3" stroke-width="1.200" d="M15 19v-7M12 14l3-3 2 3"/><path fill="none" stroke="#e42" stroke-width="1.200" d="M15 19h7M19 16l3 3-3 3"/></symbol>
    <symbol id="k-corner" viewBox="0 0 32 32"><path fill="#fff" stroke="#000" stroke-width="2" d="M3 3h26v27H3z"/><path fill="none" stroke="#3c3" stroke-width="1.500" d="M3 30v-7M1 26l2-3 2 3"/><path fill="none" stroke="#e42" stroke-width="1.500" d="M3 30h7M7 27l3 3-3 2"/></symbol>
    <symbol id="k-folder" viewBox="0 0 32 32"><path fill="#9cc7de" d="M2 4h9l3 3h16v6H2z"/><path fill="url(#g-folder)" d="M0 8h32v20c0 1-1 2-2 2H2c-1 0-2-1-2-2z"/><path fill="url(#g-metal)" d="M8 14l4-2 12-1-1 4-5 3v2l5 1 1 3-7 5-8-4 1-3 4-1v-4l-6-1z"/></symbol>
  </svg>

  <header class="titlebar">
    <div class="quick">
      <svg class="ico"><use href="#logo"/></svg>
      <button aria-label="New"><svg class="ico"><use href="#doc"/></svg></button>
      <button aria-label="New scene"><svg class="ico"><use href="#doc-check"/></svg></button>
      <button aria-label="New drawing"><svg class="ico"><use href="#doc-i"/></svg></button>
      <button aria-label="New part"><svg class="ico"><use href="#doc-i2"/></svg></button>
      <button aria-label="New sheet"><svg class="ico"><use href="#doc-swirl"/></svg></button>
      <button aria-label="Open"><svg class="ico"><use href="#folder"/></svg></button>
      <button aria-label="Save"><svg class="ico"><use href="#disk"/></svg></button>
      <button aria-label="Save as"><svg class="ico"><use href="#disk-pen"/></svg></button>
      <button aria-label="Export"><svg class="ico"><use href="#redo-page"/></svg></button>
      <button aria-label="Insert"><svg class="ico"><use href="#cube-plus"/></svg></button>
      <button aria-label="Print"><svg class="ico"><use href="#printer"/></svg></button>
      <button aria-label="Undo"><svg class="ico"><use href="#undo"/></svg></button>
      <button aria-label="Redo"><svg class="ico"><use href="#redo"/></svg></button>
      <button aria-label="TriBall"><svg class="ico"><use href="#globe"/></svg></button>
      <button class="on" aria-label="Scene browser"><svg class="ico"><use href="#tree-star"/></svg></button>
      <button class="on" aria-label="Catalogs"><svg class="ico"><use href="#cat-star"/></svg></button>
      <button aria-label="Properties"><svg class="ico"><use href="#listbox"/></svg></button>
      <button class="more" aria-label="Customize"><i class="caret"></i></button>
    </div>
    <h1>IRONCAD 2019 (NFR) - [radial engin...sembly*]</h1>
    <div class="winbtns">
      <button aria-label="Minimize"><svg><use href="#minus"/></svg></button>
      <button aria-label="Restore"><svg><use href="#restore"/></svg></button>
      <button aria-label="Close"><svg><use href="#cross"/></svg></button>
    </div>
  </header>

  <nav class="tabs">
    <a href="#menu">Menu</a>
    <a href="#home">Home</a>
    <a href="#feature">Feature</a>
    <a href="#sketch" class="active">Sketch</a>
    <a href="#surface">Surface</a>
    <a href="#assembly">Assembly</a>
    <a href="#sheet">Sheet Metal</a>
    <a href="#tools">Tools</a>
    <a href="#markup">Smart Markup</a>
    <a href="#vis">Visualization</a>
    <a href="#anno">Annotation</a>
    <a href="#common">Common</a>
    <a href="#addins">Add-Ins</a>
    <div class="tabs-right">
      <button>Styles <i class="caret"></i></button>
      <button aria-label="Help"><svg class="ico"><use href="#help"/></svg><i class="caret"></i></button>
      <button aria-label="Minimize document"><svg class="mini"><use href="#minus"/></svg></button>
      <button aria-label="Restore document"><svg class="mini"><use href="#restore"/></svg></button>
      <button aria-label="Close document"><svg class="mini"><use href="#cross"/></svg></button>
    </div>
  </nav>

  <section class="ribbon">
    <div class="group g-sketch">
      <button class="big finish"><svg><use href="#finish"/></svg><span>Finish</span><i class="caret"></i></button>
      <div class="glabel">Sketch</div>
    </div>
    <div class="group g-drawing">
      <div class="cmds">
        <button class="cmd"><svg class="ico"><use href="#polyline"/></svg><span><u>P</u>olyline</span></button>
        <button class="cmd"><svg class="ico"><use href="#rect"/></svg><span>Rectangle</span><i class="caret"></i></button>
        <button class="cmd"><svg class="ico"><use href="#ellipse"/></svg><span><u>E</u>llipse</span><i class="caret"></i></button>
        <button class="cmd" disabled><svg class="ico"><use href="#formula"/></svg><span>Formula</span></button>
        <button class="cmd"><svg class="ico"><use href="#construct"/></svg><span>Construction</span></button>
        <button class="cmd"><svg class="ico"><use href="#line2"/></svg><span>T<u>w</u>o Point</span><i class="caret"></i></button>
        <button class="cmd"><svg class="ico"><use href="#circle3"/></svg><span>Three <u>P</u>oints</span><i class="caret"></i></button>
        <button class="cmd"><svg class="ico"><use href="#spline"/></svg><span>B<u>S</u>pline</span><i class="caret"></i></button>
        <button class="cmd wide2"><svg class="ico"><use href="#point"/></svg><span>Point</span></button>
        <button class="cmd"><svg class="ico"><use href="#centerline"/></svg><span><u>C</u>enterLine</span><i class="caret"></i></button>
        <button class="cmd"><svg class="ico"><use href="#arc"/></svg><span>By Two Tangents and One Point</span><i class="caret"></i></button>
        <button class="cmd"><svg class="ico"><use href="#text"/></svg><span>Text</span></button>
        <button class="cmd wide2"><svg class="ico"><use href="#project"/></svg><span>Project</span><i class="caret"></i></button>
      </div>
      <div class="glabel">Drawing</div>
    </div>
    <div class="group g-modify">
      <div class="cmds">
        <button class="cmd"><svg class="ico"><use href="#move"/></svg><span>Move</span></button>
        <button class="cmd"><svg class="ico"><use href="#offset"/></svg><span>Offset</span></button>
        <button class="cmd"><svg class="ico"><use href="#fillet"/></svg><span><u>F</u>illet</span><i class="caret"></i></button>
        <button class="cmd pressed"><svg class="ico"><use href="#trim"/></svg><span>T<u>r</u>im</span></button>
        <button class="cmd"><svg class="ico"><use href="#rotate"/></svg><span>Rotate</span></button>
        <button class="cmd"><svg class="ico"><use href="#mirror-m"/></svg><span>Mirror</span></button>
        <button class="cmd"><svg class="ico"><use href="#extend"/></svg><span><u>E</u>xtend</span></button>
        <button class="cmd"><svg class="ico"><use href="#clear"/></svg><span>Clear Duplicate</span></button>
        <button class="cmd"><svg class="ico"><use href="#scale"/></svg><span>Scale</span></button>
        <button class="cmd"><svg class="ico"><use href="#pattern"/></svg><span>Linear Pattern</span><i class="caret"></i></button>
        <button class="cmd"><svg class="ico"><use href="#split"/></svg><span>Sp<u>l</u>it</span></button>
      </div>
      <div class="glabel">Modify</div>
    </div>
    <div class="group g-constraints">
      <div class="row">
        <button class="big smart"><svg><use href="#smart"/></svg><span>Smart</span><span>Dimension <i class="caret"></i></span></button>
        <div class="cmds">
          <button class="cmd"><svg class="ico"><use href="#c-horiz"/></svg><span>Horizontal</span></button>
          <button class="cmd"><svg class="ico"><use href="#c-tan"/></svg><span>Tangent</span></button>
          <button class="cmd"><svg class="ico"><use href="#c-equal"/></svg><span>Equal Length</span></button>
          <button class="cmd"><svg class="ico"><use href="#c-coin"/></svg><span>Coincident</span></button>
          <button class="cmd"><svg class="ico"><use href="#c-pen"/></svg><span>Penetrating Point</span></button>
          <button class="cmd"><svg class="ico"><use href="#c-vert"/></svg><span>Vertical</span></button>
          <button class="cmd"><svg class="ico"><use href="#c-par"/></svg><span>Parallel</span></button>
          <button class="cmd"><svg class="ico"><use href="#c-colin"/></svg><span>Colinear</span></button>
          <button class="cmd"><svg class="ico"><use href="#c-mirror"/></svg><span>Mirror</span></button>
          <button class="cmd"><svg class="ico"><use href="#c-edit"/></svg><span>Edit Dimension</span></button>
          <button class="cmd"><svg class="ico"><use href="#c-perp"/></svg><span>Perpendicular</span></button>
          <button class="cmd"><svg class="ico"><use href="#c-conc"/></svg><span>Concentric</span></button>
          <button class="cmd"><svg class="ico"><use href="#c-mid"/></svg><span>Midpoint</span></button>
          <button class="cmd"><svg class="ico"><use href="#c-fixed"/></svg><span>Fixed</span></button>
          <button class="cmd"><svg class="ico"><use href="#c-points"/></svg><span>Points Horizontal</span><i class="caret"></i></button>
        </div>
      </div>
      <div class="glabel">Constraints</div>
    </div>
    <div class="group g-display">
      <button class="big"><svg><use href="#display"/></svg><span>Display</span><i class="caret"></i></button>
      <div class="glabel">Display</div>
    </div>
  </section>

  <div class="selbar">
    <div class="selbar-in">
      <i class="vgrip"></i>
      <button aria-label="Undo selection"><svg class="ico18"><use href="#sel-undo"/></svg></button>
      <button aria-label="Select"><svg class="ico18"><use href="#cursor"/></svg></button>
      <button aria-label="Box select"><svg class="ico18"><use href="#sel-box"/></svg></button>
      <select class="combo" aria-label="Style"><option>Default</option></select>
      <select class="combo any" aria-label="Filter"><option>Any</option></select>
      <select class="combo" aria-label="Level"><option>assembly</option></select>
      <button aria-label="Structure"><svg class="ico18"><use href="#org"/></svg></button>
    </div>
  </div>

  <div class="work">
    <aside class="side">
      <div class="side-in">
        <i class="grip"></i>
        <button aria-label="Cube"><svg class="ico18"><use href="#s-cube"/></svg></button>
        <button aria-label="Boolean"><svg class="ico18"><use href="#s-bool"/></svg></button>
        <hr>
        <button aria-label="Union"><svg class="ico18"><use href="#s-bool2"/></svg></button>
        <button aria-label="Intersect"><svg class="ico18"><use href="#s-bool"/></svg></button>
        <button aria-label="Subtract"><svg class="ico18"><use href="#s-bool3"/></svg></button>
        <i class="left"></i>
        <i class="grip"></i>
        <button aria-label="Front view"><svg class="ico18"><use href="#v-front"/></svg></button>
        <button aria-label="Top view"><svg class="ico18"><use href="#v-top"/></svg></button>
        <button aria-label="Left view"><svg class="ico18"><use href="#v-left"/></svg></button>
        <button aria-label="Right view"><svg class="ico18"><use href="#v-right"/></svg></button>
        <button aria-label="Back view"><svg class="ico18"><use href="#v-back"/></svg></button>
        <button aria-label="Bottom view"><svg class="ico18"><use href="#v-bottom"/></svg></button>
        <button aria-label="Isometric 1"><svg class="ico18"><use href="#v-iso1"/></svg></button>
        <button aria-label="Isometric 2"><svg class="ico18"><use href="#v-iso2"/></svg></button>
        <button aria-label="Isometric 3"><svg class="ico18"><use href="#v-iso3"/></svg></button>
        <button aria-label="Isometric 4"><svg class="ico18"><use href="#v-iso4"/></svg></button>
        <i class="left"></i>
        <i class="grip"></i>
        <button aria-label="Linear dimension"><svg class="ico18"><use href="#d-line"/></svg></button>
        <button aria-label="Slot dimension"><svg class="ico18"><use href="#d-slot"/></svg></button>
        <button aria-label="Ordinate dimension"><svg class="ico18"><use href="#d-ord"/></svg></button>
        <button aria-label="Angle dimension"><svg class="ico18"><use href="#d-angle"/></svg></button>
        <button aria-label="Radius dimension"><svg class="ico18"><use href="#d-rad"/></svg></button>
        <button aria-label="Diameter dimension"><svg class="ico18"><use href="#d-dia"/></svg></button>
        <hr>
        <button aria-label="Note"><svg class="ico18"><use href="#d-note"/></svg></button>
        <button aria-label="Fastener"><svg class="ico18"><use href="#d-bolt"/></svg></button>
        <i class="left"></i>
      </div>
    </aside>

    <div class="right">
      <div class="doctabs">
        <div class="doctab"><span>radial engin...sembly*</span><button aria-label="Close tab"><svg class="sm"><use href="#cross"/></svg></button></div>
        <i class="caret big-caret"></i>
      </div>

      <div class="main">
        <section class="panel">
          <div class="phead">
            <h2>Properties</h2>
            <button aria-label="Panel menu"><i class="caret big-caret"></i></button>
            <button aria-label="Pin"><svg class="sm"><use href="#pin"/></svg></button>
            <button aria-label="Close panel"><svg class="sm"><use href="#cross"/></svg></button>
          </div>
          <form class="pbody">
            <h3 class="fold shut">Message</h3>
            <h3 class="fold">Actions</h3>
            <div class="actions">
              <button type="button" aria-label="Edit sketch"><svg class="ico18"><use href="#act-edit"/></svg></button>
              <button type="button" aria-label="Parameter table"><svg class="ico18"><use href="#act-table"/></svg></button>
            </div>
            <h3 class="fold">Property</h3>
            <label class="opt first"><input type="checkbox" checked> Display Grid</label>
            <div class="field"><label for="majx">Major X(mm)</label><input id="majx" type="text" value="10"></div>
            <div class="field"><label for="majy">Major Y(mm)</label><input id="majy" type="text" value="10"></div>
            <div class="field"><label for="minx">Minor X(mm)</label><input id="minx" type="text" value="2.500"></div>
            <div class="field"><label for="miny">Minor Y(mm)</label><input id="miny" type="text" value="2.500"></div>
            <div class="opts">
              <label class="opt"><input type="checkbox"> Snap to Grid</label>
              <label class="opt"><input type="checkbox" checked> Snap to Construction Geometry</label>
              <label class="opt"><input type="radio" name="show"> Hide Edited Intellishape</label>
              <label class="opt"><input type="radio" name="show"> Hide Edited Part</label>
              <label class="opt"><input type="radio" name="show"> Hide All</label>
              <label class="opt"><input type="radio" name="show" checked> Display All</label>
            </div>
            <button type="button" class="under" disabled>UnderDefined</button>
          </form>
          <div class="ptabs">
            <a href="#scene"><svg class="ico"><use href="#scene"/></svg>Scene</a>
            <a href="#props" class="active"><svg class="ico"><use href="#props"/></svg>Properties</a>
            <a href="#search"><svg class="ico"><use href="#search"/></svg>Search</a>
          </div>
        </section>

        <div class="canvas">
          <svg viewBox="0 0 1543 600" preserveAspectRatio="xMinYMin slice">
            <defs>
              <linearGradient id="bg" x1="0" x2="0" y1="0" y2="1"><stop offset="0" stop-color="#4b4858"/><stop offset=".3" stop-color="#65616f"/><stop offset=".55" stop-color="#807c86"/><stop offset="1" stop-color="#a6a0a7"/></linearGradient>
              <linearGradient id="band"><stop offset="0" stop-color="#777780"/><stop offset=".25" stop-color="#787881"/><stop offset=".5" stop-color="#86868e"/><stop offset=".65" stop-color="#92929a"/><stop offset=".78" stop-color="#9898a1"/><stop offset=".9" stop-color="#90909a"/><stop offset="1" stop-color="#82828a"/></linearGradient>
            </defs>
            <rect width="1543" height="600" fill="url(#bg)"/>
            <rect y="182" width="1543" height="148" fill="url(#band)"/>
            <path stroke="#7f7c89" d="M0 83.500h1543M23.500 0v182M147.500 0v182M271.500 0v182M394.500 0v182M518.500 0v182M642.500 0v182M889.500 0v182M1013.500 0v182M1136.500 0v182M1260.500 0v182M1383.500 0v182M1507.500 0v182"/>
            <path stroke="#6f7078" d="M0 206.500h1543M0 454.500h1543M0 578.500h1543M23.500 182v418M147.500 182v418M271.500 182v418M394.500 182v418M518.500 182v418M642.500 182v418M889.500 182v418M1013.500 182v418M1136.500 182v418M1260.500 182v418M1383.500 182v418M1507.500 182v418"/>
            <path stroke="#3f3f43" stroke-width="2" d="M0 182h1543"/>
            <path stroke="#4a4040" d="M0 331.500h1543"/>
            <path stroke="#f01010" stroke-dasharray="23 3 4 2" d="M765.500 0v600"/>
            <g fill="none" stroke="#0080ff" stroke-width="3">
              <path d="M656 182h70M804 330h70M656 182l148 148M726 182l148 148"/>
            </g>
            <path stroke="#00f000" stroke-dasharray="18 3 4 3" d="M0 330.500h1543"/>
            <path fill="none" stroke="#00ff00" stroke-width="3" d="M745 330h20"/>
            <path fill="#00ff00" d="M734 330l13-5v10z"/>
            <path stroke="#f00" stroke-width="3" d="M765 332v20"/>
            <path fill="#f00" d="M765 363l-4-12h8z"/>
            <text class="axis" x="725" y="335" fill="#00f000">Y</text>
            <text class="axis" x="765" y="376" fill="#f01010">X</text>
            <path stroke="#000080" stroke-width="2" d="M691 165v10M839 337v10"/>
            <g fill="#fff" stroke="#111" stroke-width="2">
              <circle cx="656" cy="182" r="3"/><circle cx="726" cy="182" r="3"/><circle cx="804" cy="330" r="3"/><circle cx="874" cy="330" r="3"/>
            </g>
            <path stroke="#8df08d" stroke-width="2" d="M37 563v-12"/>
            <path fill="#0a8a1a" d="M37 544l-3 9h6z"/>
            <path stroke="#c02020" stroke-width="2" d="M36 564H26"/>
            <path fill="#c02020" d="M17 564l9-3v6z"/>
            <circle cx="37" cy="564" r="2" fill="#fff"/>
            <text x="35" y="538" fill="#00f000">Y</text>
            <text x="6" y="567" fill="#f01818">X</text>
            <text x="42" y="567" fill="#1010f0">Z</text>
          </svg>
        </div>
      </div>

      <section class="catalog">
        <div class="phead">
          <h2>Catalog Browser</h2>
          <button aria-label="Catalog menu"><i class="caret big-caret"></i></button>
          <button aria-label="Pin catalog"><svg class="sm"><use href="#pin"/></svg></button>
          <button aria-label="Close catalog"><svg class="sm"><use href="#cross"/></svg></button>
        </div>
        <div class="cbtns">
          <button><svg class="ico"><use href="#book"/></svg><span>New</span></button>
          <button><svg class="ico"><use href="#book-open"/></svg><span>Open</span></button>
          <button><svg class="ico"><use href="#book-save"/></svg><span>Save</span></button>
          <button><svg class="ico"><use href="#book-close"/></svg><span>Close</span></button>
        </div>
        <div class="csearch">
          <button aria-label="Back"><svg class="arrow" viewBox="0 0 14 14"><path fill="#a0a0a0" d="M0 7l6-6v4h8v5H6v4z"/></svg></button>
          <input type="text" aria-label="Search catalog" placeholder="Search ...">
          <button class="x" aria-label="Clear"><svg class="arrow" viewBox="0 0 14 14"><path stroke="#c22030" stroke-width="2" d="M1 1l12 12M13 1L1 13"/></svg></button>
        </div>
        <div class="items">
          <a href="#i"><svg><use href="#k-block"/></svg>Block</a>
          <a href="#i"><svg><use href="#k-hblock"/></svg>H Block</a>
          <a href="#i"><svg><use href="#k-cyl"/></svg>Cylinder</a>
          <a href="#i"><svg><use href="#k-hcyl"/></svg>H Cylinder</a>
          <a href="#i"><svg><use href="#k-slot"/></svg>Slot</a>
          <a href="#i"><svg><use href="#k-hslot"/></svg>H Slot</a>
          <a href="#i"><svg><use href="#k-ell"/></svg>Ellipse</a>
          <a href="#i"><svg><use href="#k-hell"/></svg>H Ellipse</a>
          <a href="#i"><svg><use href="#k-poly"/></svg>Poly</a>
          <a href="#i"><svg><use href="#k-hpoly"/></svg>H Poly</a>
          <a href="#i"><svg><use href="#k-sphere"/></svg>Sphere</a>
          <a href="#i"><svg><use href="#k-hsphere"/></svg>H Sphere</a>
          <a href="#i"><svg><use href="#k-bolt"/></svg>Bolt Block</a>
          <a href="#i"><svg><use href="#k-hbolt"/></svg>H Bolt Block</a>
          <a href="#i"><svg><use href="#k-spin"/></svg>Spin</a>
          <a href="#i"><svg><use href="#k-hspin"/></svg>H Spin</a>
          <a href="#i"><svg><use href="#k-tcyl"/></svg>Thru H<br>Cylinder</a>
          <a href="#i"><svg><use href="#k-tblk"/></svg>Thru H Block</a>
          <a href="#i"><svg><use href="#k-center"/></svg>Center<br>Sketch</a>
          <a href="#i"><svg><use href="#k-corner"/></svg>Corner<br>Sketch</a>
          <a href="#i"><svg><use href="#k-folder"/></svg>Tools</a>
          <a href="#i"><svg><use href="#k-folder"/></svg>Sheet Metal</a>
          <a href="#i"><svg><use href="#k-folder"/></svg>Polygons</a>
          <a href="#i"><svg><use href="#k-folder"/></svg>Additional<br>Shapes</a>
          <a href="#i"><svg><use href="#k-folder"/></svg>Materials</a>
          <a href="#i"><svg><use href="#k-folder"/></svg>Getting<br>Started</a>
        </div>
        <div class="ctabs">
          <a href="#c" class="active">Starter</a>
          <a href="#c">Shapes</a>
          <a href="#c">Advshaps</a>
          <a href="#c">FlexShapes</a>
          <a href="#c">SheetMtl</a>
          <a href="#c">Tools</a>
          <a href="#c">Materials</a>
          <a href="#c">Animatn</a>
          <a href="#c">Surfaces</a>
          <a href="#c">Textures</a>
          <a href="#c">Bumps</a>
          <a href="#c">Colors</a>
          <a href="#c">Steel Frames</a>
          <a href="#c">Tank</a>
          <i class="caret big-caret"></i>
        </div>
      </section>
    </div>
  </div>

  <footer class="status">
    <span class="hint">Specify the curve to trim.</span>
    <span class="coords">X: 5.003 Y: 6.118 Z: 0.000</span>
    <span class="units">Units: mm, deg</span>
    <div class="stbtns">
      <button aria-label="Fit"><svg class="ico18"><use href="#zoom-doc"/></svg></button>
      <button class="dd" aria-label="Zoom"><svg class="ico18"><use href="#zoom-box"/></svg><i class="caret"></i></button>
      <button class="dd" aria-label="Add"><svg class="ico18"><use href="#ycube"/></svg><i class="caret"></i></button>
      <button class="dd" aria-label="Shading"><svg class="ico18"><use href="#bcube"/></svg><i class="caret"></i></button>
      <button class="dd" aria-label="Camera"><svg class="ico18"><use href="#camera"/></svg><i class="caret"></i></button>
      <button aria-label="Perspective"><svg class="ico18"><use href="#wedge"/></svg></button>
      <button class="dd near" aria-label="View"><svg class="ico18"><use href="#glasses"/></svg><i class="caret"></i></button>
      <button class="dd near" aria-label="Edges"><svg class="ico18"><use href="#edgebox"/></svg><i class="caret"></i></button>
      <button class="dd near" aria-label="Parts"><svg class="ico18"><use href="#blocks"/></svg><i class="caret"></i></button>
      <button aria-label="Undo pick"><svg class="ico18"><use href="#sel-undo"/></svg></button>
      <button aria-label="Pick"><svg class="ico18"><use href="#cursor"/></svg></button>
      <button aria-label="Box pick"><svg class="ico18"><use href="#pick-gray"/></svg></button>
      <select class="combo st1" aria-label="Status filter" disabled><option>Any</option></select>
      <select class="combo st2" aria-label="Status level" disabled><option>assembly</option></select>
      <button aria-label="Status structure"><svg class="ico18"><use href="#org2"/></svg></button>
    </div>
  </footer>
  <div class="taskbar"></div>
</body>
</html>
```
FILE: styles.css
```css
* {
  box-sizing: border-box;
}

body {
  margin: 0;
  height: 100vh;
  overflow: hidden;
  display: flex;
  flex-direction: column;
  font-family: "Segoe UI", "Open Sans", "Noto Sans", sans-serif;
  font-size: 11px;
  line-height: 16px;
  color: #444;
  background: #e6e6e6;
}

button, input, select {
  font: inherit;
  color: inherit;
}

button {
  border: none;
  background: none;
  padding: 0;
  display: flex;
  align-items: center;
}

a {
  color: inherit;
  text-decoration: none;
}

h1, h2, h3 {
  margin: 0;
  font-size: 11px;
  font-weight: normal;
}

.sprite {
  position: absolute;
  width: 0;
  height: 0;
}

.ico {
  width: 16px;
  height: 16px;
  flex: none;
}

.ico18 {
  width: 18px;
  height: 18px;
  flex: none;
}

.sm, .mini {
  width: 12px;
  height: 12px;
  flex: none;
}

.caret {
  display: inline-block;
  border: 3px solid transparent;
  border-top-color: currentColor;
  border-bottom: none;
  flex: none;
}

.big-caret {
  border-width: 5px 5px 0;
  color: #666;
}

/* title bar */
.titlebar {
  height: 30px;
  flex: none;
  display: flex;
  align-items: flex-start;
  background: #2b579a;
  color: #fff;
}

.quick {
  display: flex;
  padding-top: 3px;
}

.quick > svg {
  margin-right: 8px;
}

.quick button {
  width: 24px;
  padding: 0 4px;
}

.quick button.on {
  background: #2f66b8;
}

.quick .more {
  flex-direction: column;
  justify-content: center;
  gap: 1px;
}

.quick .more::before {
  content: "";
  width: 5px;
  height: 1px;
  background: #fff;
}

.titlebar h1 {
  flex: 1;
  padding-top: 6px;
  text-align: center;
}

.winbtns {
  display: flex;
  justify-content: flex-end;
  gap: 24px;
  padding: 6px 12px 0 0;
}

.winbtns svg {
  width: 12px;
  height: 12px;
}

/* ribbon tabs */
.tabs {
  height: 26px;
  flex: none;
  display: flex;
  gap: 1px;
  background: #2b579a;
  color: #fff;
}

.tabs a {
  padding: 5px 15px;
  white-space: nowrap;
}

.tabs a.active {
  background: #f0f0f0;
  color: #1e6bc8;
}

.tabs-right {
  margin-left: auto;
  display: flex;
  align-items: center;
  gap: 7px;
  padding-right: 5px;
}

.tabs-right button {
  gap: 8px;
}

/* ribbon */
.ribbon {
  height: 99px;
  flex: none;
  display: flex;
  padding: 4px 0 3px;
  background: #f0f0f0;
  border-bottom: 1px solid #ccc;
}

.group {
  display: flex;
  flex-direction: column;
  justify-content: space-between;
  padding-top: 1px;
  border-right: 1px solid #d2d2d2;
}

.glabel {
  text-align: center;
  color: #777;
  padding-bottom: 1px;
}

.row {
  display: flex;
}

.cmds {
  display: grid;
  grid-auto-rows: 22px;
  justify-items: start;
}

.cmd {
  height: 22px;
  gap: 3px;
  padding: 0 4px 0 3px;
  white-space: nowrap;
}

.cmd .caret {
  margin-left: 3px;
}

.cmd:disabled {
  color: #aaa;
}

.cmd.pressed {
  background: #c6c6c6;
}

.wide2 {
  grid-column: span 2;
}

.g-sketch {
  width: 54px;
  padding-left: 7px;
  padding-right: 4px;
}

.g-drawing .cmds {
  grid-template-columns: 92px 205px 74px 72px 99px;
  padding-left: 6px;
}

.g-modify .cmds {
  grid-template-columns: 60px 108px 61px 112px;
  padding-left: 6px;
}

.g-constraints .cmds {
  grid-template-columns: 99px 84px 95px 84px 130px;
}

.g-display {
  width: 51px;
}

.big {
  flex-direction: column;
  height: 70px;
  line-height: 15px;
}

.big svg {
  width: 32px;
  height: 32px;
  margin: 3px 0 4px;
}

.big .caret {
  margin-top: 3px;
}

.big span .caret {
  vertical-align: middle;
  margin: 0 0 0 2px;
}

.g-display .big, .finish {
  width: 100%;
}

.finish {
  background: linear-gradient(#dcdcdc 39px, #ebebeb 39px);
}

.smart {
  width: 75px;
  padding-left: 3px;
}

/* selection bar */
.selbar {
  height: 30px;
  flex: none;
  display: flex;
}

.selbar-in {
  display: flex;
  align-items: center;
  width: 548px;
  padding-left: 3px;
  gap: 4px;
  background: #f0f0f0;
}

.vgrip {
  width: 2px;
  height: 18px;
  margin-right: 2px;
  background: repeating-linear-gradient(#aaa 0 2px, transparent 2px 4px);
}

.combo {
  appearance: none;
  width: 146px;
  height: 24px;
  padding: 0 2px;
  border: 1px solid #d0d0d0;
  border-radius: 0;
  color: #111;
  background-color: #e9e9e9;
  background-image: linear-gradient(45deg, transparent 50%, #aaa 50%), linear-gradient(135deg, #aaa 50%, transparent 50%);
  background-position: right 7px center, right 4px center;
  background-size: 3px 3px;
  background-repeat: no-repeat;
}

.combo.any {
  color: #777;
  background-image: linear-gradient(45deg, transparent 50%, #aaa 50%), linear-gradient(135deg, #aaa 50%, transparent 50%), linear-gradient(#fff, #fff);
  background-position: right 7px center, right 4px center, 1px 2px;
  background-size: 3px 3px, 3px 3px, 127px 18px;
}

/* side toolbar */
.work {
  flex: 1;
  min-height: 0;
  display: flex;
}

.side {
  width: 25px;
  flex: none;
}

.side-in {
  margin-top: 182px;
  padding-right: 2px;
  background: #f0f0f0;
  display: flex;
  flex-direction: column;
  align-items: center;
}

.side-in button {
  height: 22px;
}

.side-in hr {
  width: 23px;
  height: 1px;
  margin: 3px 0 2px;
  border: none;
  background: #ccc;
}

.grip {
  width: 15px;
  height: 2px;
  margin: 6px 0;
  background: repeating-linear-gradient(to right, #aaa 0 2px, transparent 2px 4px);
}

.left {
  margin: 2px 0 2px -8px;
  border: 3px solid transparent;
  border-right-color: #666;
  border-left: none;
}

/* document tab */
.right {
  flex: 1;
  min-width: 0;
  display: flex;
  flex-direction: column;
}

.doctabs {
  height: 22px;
  flex: none;
  display: flex;
  justify-content: space-between;
  align-items: center;
  padding: 2px 4px 0 2px;
}

.doctab {
  display: flex;
  align-items: center;
  justify-content: space-between;
  width: 178px;
  height: 20px;
  padding: 0 4px 0 33px;
  font-weight: 600;
  border-right: 1px solid #aaa;
  background: linear-gradient(135deg, transparent 13px, #aaa 13px, #aaa 14px, #fff 14px);
}

/* properties panel */
.main {
  flex: 1;
  min-height: 0;
  display: flex;
}

.panel {
  width: 351px;
  flex: none;
  display: flex;
  flex-direction: column;
  padding-right: 6px;
  background: linear-gradient(to left, #fff 1px, #cfcfcf 1px 5px, #e6e6e6 5px);
}

.phead {
  height: 25px;
  flex: none;
  display: flex;
  align-items: center;
  gap: 7px;
  padding: 0 5px 0 4px;
}

.phead h2 {
  flex: 1;
}

.pbody {
  flex: 1;
  padding: 1px 6px 0;
  background: #fff;
  color: #111;
}

.fold {
  font-size: 12px;
  font-weight: 600;
  color: #333;
  height: 24px;
  line-height: 20px;
  display: flex;
  align-items: center;
}

.fold::before {
  content: "";
  margin: 0 11px 0 5px;
  border: 3px solid transparent;
  border-right-color: #999;
  border-bottom-color: #999;
}

.fold.shut::before {
  content: "▷";
  border: none;
  margin: 0 10px 0 5px;
  font-size: 8px;
  color: #888;
}

.actions {
  height: 24px;
  margin: -3px 0 9px;
  padding-left: 11px;
  display: flex;
  align-items: center;
  gap: 4px;
  background: #eee;
}

.opts {
  margin-top: -3px;
}

.opt {
  display: flex;
  align-items: center;
  gap: 5px;
  height: 21px;
}

.opt.first {
  height: 17px;
  margin: -4px 0 5px;
}

.opt input {
  appearance: none;
  width: 13px;
  height: 13px;
  margin: 0;
  border: 1px solid #333;
  background: #fff;
}

.opt input[type=radio] {
  border-radius: 50%;
}

.opt input[type=radio]:checked {
  background: radial-gradient(#222 3px, #fff 4px);
}

.opt input[type=checkbox]:checked::before {
  content: "";
  display: block;
  width: 4px;
  height: 7px;
  margin: 1px 0 0 4px;
  border: solid #333;
  border-width: 0 1px 1px 0;
  transform: rotate(40deg);
}

.field {
  display: flex;
  align-items: center;
  height: 19px;
  margin-bottom: 6px;
}

.field label {
  width: 77px;
  white-space: nowrap;
}

.field input {
  flex: 1;
  min-width: 0;
  height: 19px;
  padding: 0 4px;
  border: 1px solid #666;
}

.under {
  width: 100%;
  height: 19px;
  margin-top: 4px;
  justify-content: center;
  color: #888;
  background: #ccc;
  border: 1px solid #c4c4c4;
}

.ptabs {
  height: 23px;
  flex: none;
  display: flex;
  align-items: flex-start;
}

.ptabs a {
  display: flex;
  align-items: center;
  gap: 3px;
  height: 21px;
  padding: 0 6px 0 4px;
}

.ptabs a.active {
  padding: 0 4px 0 3px;
  background: #fff;
  border: 1px solid #aaa;
  border-top: none;
}

/* canvas */
.canvas {
  flex: 1;
  min-width: 0;
  overflow: hidden;
  background: #807c86;
}

.canvas svg {
  display: block;
  width: 100%;
  height: 100%;
  font-size: 11px;
}

.canvas .axis {
  font-size: 13px;
  text-anchor: middle;
}

/* catalog browser */
.catalog {
  flex: none;
  border-top: 6px solid #cfcfcf;
}

.cbtns {
  display: grid;
  grid-template-columns: repeat(4, 1fr);
  gap: 2px;
  padding: 1px 2px 1px 1px;
}

.cbtns button {
  height: 18px;
  padding-left: 5px;
  border: 1px solid #adadad;
  background: #e1e1e1;
  color: #111;
}

.cbtns span {
  flex: 1;
  text-align: center;
}

.csearch {
  height: 20px;
  display: flex;
  align-items: center;
  padding: 0 1px;
  background: #fff;
}

.csearch button {
  width: 18px;
  height: 18px;
  border: 1px solid #c8c8c8;
  background: #e6e6e6;
  justify-content: center;
}

.csearch .arrow {
  width: 14px;
  height: 14px;
  flex: none;
}

.csearch .x {
  background: #f0ece0;
}

.csearch input {
  flex: 1;
  border: none;
  outline: none;
  padding: 0 4px 3px;
}

.csearch input::placeholder {
  color: #555;
}

.items {
  display: grid;
  grid-template-columns: repeat(auto-fill, 75px);
  grid-auto-rows: 75px;
  padding: 1px 30px 0 0;
  background: #fff;
  border: 1px solid #828790;
}

.items a {
  display: flex;
  flex-direction: column;
  align-items: center;
  text-align: center;
  white-space: nowrap;
  line-height: 15px;
  color: #111;
}

.items svg {
  width: 30px;
  height: 30px;
  margin: 4px 0 3px;
}

.ctabs {
  height: 23px;
  display: flex;
  align-items: flex-start;
}

.ctabs a {
  padding: 2px 7px;
  height: 22px;
}

.ctabs a.active {
  padding: 2px 4px;
  background: #fff;
  border: 1px solid #aaa;
  border-top: none;
}

.ctabs .caret {
  margin: 10px 4px 0 auto;
}

/* status bar */
.status {
  height: 24px;
  flex: none;
  display: flex;
  align-items: center;
  padding: 0 4px 0 1px;
  background: #f0f0f0;
  border-top: 1px solid #ccc;
}

.hint {
  flex: 1;
}

.units {
  margin: 0 12px 0 17px;
}

.stbtns {
  display: flex;
  align-items: center;
}

.stbtns button {
  width: 24px;
}

.stbtns button.dd {
  width: 35px;
  gap: 5px;
}

.stbtns button.near {
  width: 32px;
  gap: 3px;
}

.stbtns .combo {
  height: 20px;
  margin-right: 1px;
  color: #aaa;
  opacity: 1;
}

.stbtns .st1 {
  width: 89px;
}

.stbtns .st2 {
  width: 64px;
  margin-right: 3px;
  padding-right: 14px;
}

.stbtns button:last-child {
  width: 18px;
}

.taskbar {
  height: 2px;
  flex: none;
  background: linear-gradient(to right, #222 47px, #d8d8d8 47px 391px, #222 391px 640px, #555 640px 686px, #222 686px);
}
```
